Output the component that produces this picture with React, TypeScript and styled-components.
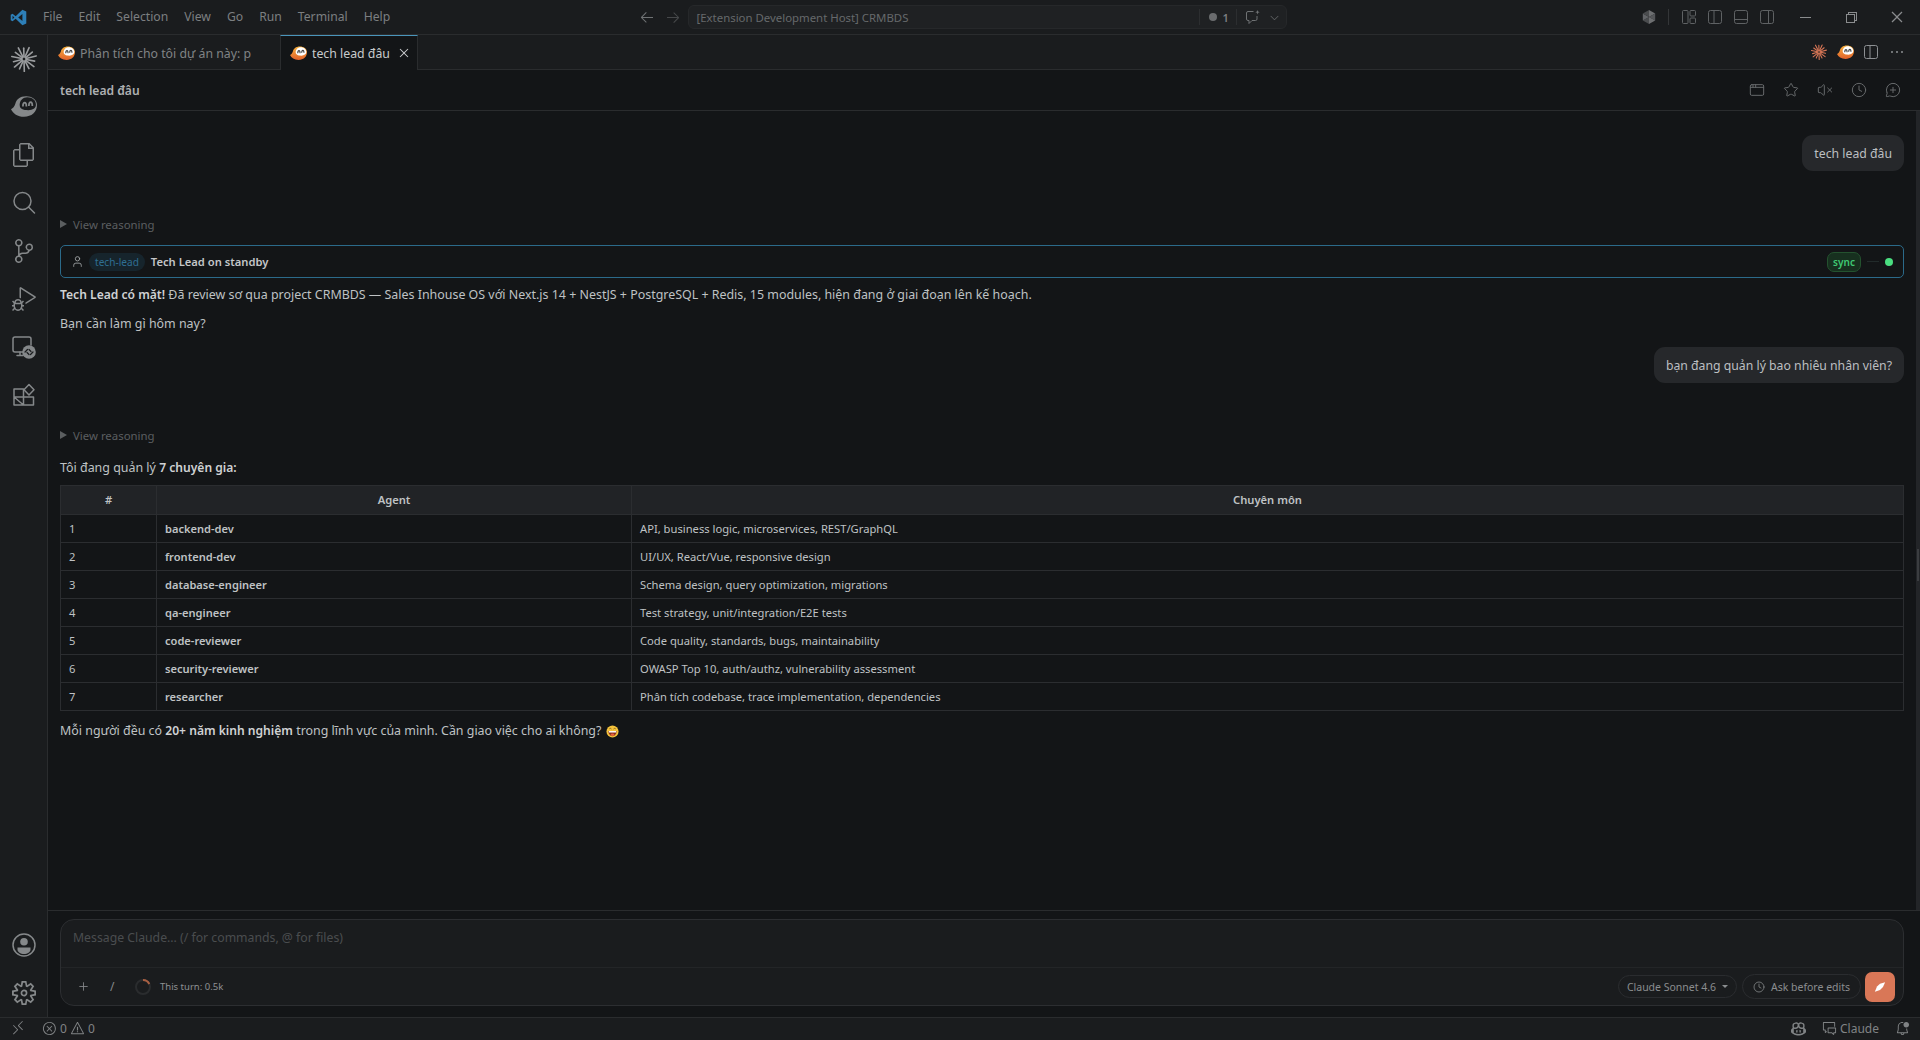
import React from "react";
import styled, { createGlobalStyle } from "styled-components";
import {
  VscFiles, VscSourceControl, VscDebugAlt, VscSettingsGear, VscArrowLeft, VscArrowRight, VscChevronDown,
  VscChromeMinimize, VscChromeRestore, VscChromeClose, VscClose, VscEllipsis, VscRemote, VscError, VscWarning,
  VscBellDot, VscCopilot, VscCommentDiscussion,
} from "react-icons/vsc";
import { AppWindow, Star, VolumeX, Clock, MessageCirclePlus, User, Plus } from "lucide-react";

const FONT = `"Noto Sans", "Open Sans", "Liberation Sans", sans-serif`;

const Global = createGlobalStyle`
  html, body { margin: 0; height: 100%; background: #131517; overflow: hidden; }
  #root { height: 100vh; }
  * { box-sizing: border-box; }
`;

const Shell = styled.div`
  height: 1040px; width: 1920px; display: flex; flex-direction: column;
  font-family: ${FONT}; font-size: 12.4px; color: #bfc2c4; background: #131517;
`;

/* ---------- title bar ---------- */
const TitleBar = styled.header`
  height: 35px; flex: none; display: grid; grid-template-columns: 1fr auto 1fr; align-items: center;
  background: #1a1c1e; border-bottom: 1px solid #2a2c2e;
`;
const TitleLeft = styled.div`display: flex; align-items: center;`;
const LogoCell = styled.div`width: 35px; padding-left: 10px; display: flex; align-items: center;`;
const MenuItem = styled.span`padding: 0 8px; color: #7c7f81; font-size: 12.2px; line-height: 34px;`;
const TitleCenter = styled.div`display: flex; align-items: center;`;
const NavButton = styled.span<{ $dim?: boolean }>`
  width: 26px; height: 24px; display: flex; align-items: center; justify-content: center;
  color: ${(p) => (p.$dim ? "#46484a" : "#6f7274")}; font-size: 16px;
`;
const CommandCenter = styled.div`
  width: 599px; height: 24px; margin-left: 2px; display: flex; align-items: center;
  background: #1f2123; border: 1px solid #26282a; border-radius: 6px; padding-left: 8px;
`;
const CommandText = styled.span`flex: 1; color: #66696b; font-size: 11.4px;`;
const CmdSep = styled.span`width: 1px; height: 16px; background: #2c2e30;`;
const CmdDot = styled.span`width: 8px; height: 8px; border-radius: 50%; background: #6a6c6e; margin: 0 6px 0 9px;`;
const CmdCount = styled.span`font-size: 11px; color: #7b7e80; font-weight: 600; margin-right: 7px; width: 6px;`;
const CmdChat = styled.span`display: flex; margin: 0 7px 0 8px; color: #6f7274;`;
const CmdChevron = styled.span`display: flex; color: #626466; font-size: 13px; margin-right: 5px;`;
const TitleRight = styled.div`display: flex; align-items: center; justify-content: flex-end;`;
const ShieldCell = styled.span`width: 26px; display: flex; justify-content: center; margin-right: 6px;`;
const TitleSep = styled.span`width: 1px; height: 16px; background: #343638; margin-right: 7px;`;
const LayoutCell = styled.span`width: 26px; display: flex; justify-content: center; color: #5f6264;`;
const WinCell = styled.span`
  width: 46px; height: 34px; display: flex; align-items: center; justify-content: center;
  color: #8a8c8e; font-size: 16px;
`;
const WinGroup = styled.div`display: flex; margin-left: 2px;`;

/* ---------- body ---------- */
const Body = styled.div`flex: 1; min-height: 0; display: flex;`;
const ActivityBar = styled.nav`
  width: 48px; flex: none; display: flex; flex-direction: column; justify-content: space-between;
  background: #1a1c1e; border-right: 1px solid #2a2c2e;
`;
const ActivityGroup = styled.div`display: flex; flex-direction: column;`;
const ActivityCell = styled.div`
  width: 47px; height: 48px; display: flex; align-items: center; justify-content: center;
  color: #85888a; font-size: 24px;
`;
const Editor = styled.main`flex: 1; min-width: 0; display: flex; flex-direction: column;`;

const TabBar = styled.div`
  height: 35px; flex: none; display: flex; background: #1a1c1e; border-bottom: 1px solid #2a2c2e;
`;
const Tab = styled.div<{ $active?: boolean }>`
  display: flex; align-items: center; height: 35px; padding-left: 9px;
  width: ${(p) => (p.$active ? "138px" : "232px")};
  background: ${(p) => (p.$active ? "#131517" : "transparent")};
  border-top: 1px solid ${(p) => (p.$active ? "#4a95bb" : "transparent")};
  border-left: 1px solid ${(p) => (p.$active ? "#2a2c2e" : "transparent")};
  border-right: 1px solid ${(p) => (p.$active ? "#2a2c2e" : "transparent")};
  color: ${(p) => (p.$active ? "#c8cacc" : "#808385")};
  font-size: 12.3px; overflow: hidden; white-space: nowrap;
`;
const TabLabel = styled.span`margin-left: 5px; flex: 1; min-width: 0; overflow: hidden;`;
const TabClose = styled.span`display: flex; font-size: 16px; color: #c8cacc; margin-right: 5px;`;
const TabActions = styled.div`margin-left: auto; display: flex; align-items: center; padding-right: 10px;`;
const TabAction = styled.span`width: 26px; display: flex; justify-content: center; color: #8d9093; font-size: 16px;`;

const ChatHeader = styled.div`
  height: 41px; flex: none; display: flex; align-items: center; padding: 0 19px 0 12px;
  border-bottom: 1px solid #2a2c2e;
`;
const ChatTitle = styled.h1`
  margin: 0; flex: 1; font-size: 12.1px; font-weight: 600; color: #aeb0b2;
`;
const HeaderIcons = styled.div`display: flex; align-items: center; gap: 18px; color: #66696b;`;

const ScrollArea = styled.div`flex: 1; min-height: 0; display: flex;`;
const Messages = styled.section`flex: 1; min-width: 0; padding: 24px 12px 0 12px; display: flex; flex-direction: column;`;
const ScrollTrack = styled.div`width: 4px; flex: none; background: #232528; position: relative;`;
const ScrollThumb = styled.div`
  position: absolute; top: 438px; left: 1px; width: 2px; height: 32px; background: #3b3d40;
`;

const UserRow = styled.div<{ $gap?: number }>`
  display: flex; justify-content: flex-end; margin-top: ${(p) => p.$gap ?? 0}px;
`;
const UserBubble = styled.div`
  height: 36px; padding: 0 12px; display: flex; align-items: center;
  background: #26282b; border-radius: 11px; color: #bcbfc1; font-size: 12.25px;
`;
const Reasoning = styled.div<{ $gap: number }>`
  margin-top: ${(p) => p.$gap}px; height: 16px; display: flex; align-items: center; gap: 6px;
  color: #5b5e60; font-size: 11.4px;
`;
const Triangle = styled.span`
  width: 0; height: 0; border-left: 7px solid #5b5e60;
  border-top: 4px solid transparent; border-bottom: 4px solid transparent;
`;
const AgentBox = styled.div`
  margin-top: 13px; height: 33px; display: flex; align-items: center; padding: 0 8px 0 10px;
  border: 1px solid #2b6a8a; border-radius: 5px;
`;
const AgentPerson = styled.span`display: flex; color: #a4a7a9; margin-right: 5px;`;
const AgentPill = styled.span`
  height: 18px; padding: 0 6px; display: flex; align-items: center; border-radius: 9px;
  background: #16242c; color: #2f6f93; font-size: 10.1px;
`;
const AgentTitle = styled.span`margin-left: 6px; flex: 1; font-size: 11.2px; font-weight: 600; color: #c4c6c8;`;
const SyncPill = styled.span`
  height: 20px; width: 34px; display: flex; align-items: center; justify-content: center; border-radius: 7px;
  background: #17301f; border: 1px solid #24522f; color: #3fc873; font-size: 10px; font-weight: 600;
`;
const SyncLine = styled.span`width: 12px; height: 1px; background: #222b2b; margin: 0 6px;`;
const SyncDot = styled.span`width: 8px; height: 8px; border-radius: 50%; background: #4ade80; margin-right: 2px;`;
const Para = styled.p<{ $gap: number }>`
  margin: ${(p) => p.$gap}px 0 0; font-size: 12.43px; line-height: 18px; color: #bfc2c4;
  display: flex; align-items: center; white-space: pre-wrap;
  strong { font-weight: 600; color: #cfd1d3; font-size: 12.1px; }
`;
const Table = styled.table`
  margin-top: 8px; width: 100%; border-collapse: collapse; table-layout: fixed; font-size: 11.2px;
`;
const Th = styled.th<{ $w?: number }>`
  width: ${(p) => (p.$w ? `${p.$w}px` : "auto")}; height: 29px; padding: 0 0 1px;
  background: #212326; border: 1px solid #2b2d30; font-weight: 600; color: #bfc2c4; text-align: center;
`;
const Td = styled.td`
  height: 28px; padding: 0 8px 1px; border: 1px solid #2b2d30; color: #bfc2c4;
`;
const AgentName = styled(Td)`font-weight: 600; font-size: 11.1px;`;
const EmojiWrap = styled.span`display: inline-flex; margin-left: 5px;`;

/* ---------- composer ---------- */
const ComposerWrap = styled.div`
  height: 107px; flex: none; padding: 8px 16px 0 12px; border-top: 1px solid #2a2c2e; background: #131517;
`;
const Composer = styled.div`
  height: 87px; background: #1a1c1e; border: 1px solid #2c2e31; border-radius: 14px;
  display: flex; flex-direction: column;
`;
const Placeholder = styled.div`
  height: 48px; flex: none; padding: 9px 12px 0; color: #4a4d4f; font-size: 12.25px;
  border-bottom: 1px solid #232527; line-height: 18px;
`;
const ComposerBar = styled.div`flex: 1; display: flex; align-items: center; padding: 0 8px 0 16px;`;
const ToolPlus = styled.span`display: flex; color: #85888a;`;
const ToolSlash = styled.span`margin-left: 20px; color: #85888a; font-size: 12px; width: 8px;`;
const Spinner = styled.span`display: flex; margin-left: 16px;`;
const TurnText = styled.span`margin-left: 8px; flex: 1; color: #8f9193; font-size: 9.5px;`;
const ModelPill = styled.span`
  width: 119px; height: 23px; display: flex; align-items: center; justify-content: center; gap: 6px;
  border: 1px solid #2a2c2f; border-radius: 12px; color: #8a8d8f; font-size: 10.5px;
`;
const Caret = styled.span`
  width: 0; height: 0; border-top: 3.5px solid #8a8d8f;
  border-left: 3.5px solid transparent; border-right: 3.5px solid transparent;
`;
const AskPill = styled.span`
  width: 119px; height: 25px; margin-left: 5px; display: flex; align-items: center; justify-content: center; gap: 6px;
  border: 1px solid #2a2c2f; border-radius: 13px; color: #8a8d8f; font-size: 10.5px;
`;
const SendButton = styled.span`
  width: 30px; height: 30px; margin-left: 4px; border-radius: 7px; background: #d97757;
  display: flex; align-items: center; justify-content: center;
`;

/* ---------- status bar ---------- */
const StatusBar = styled.footer`
  height: 23px; flex: none; display: flex; align-items: center; justify-content: space-between;
  padding: 0 10px 2px 0; background: #1a1c1e; border-top: 1px solid #2a2c2e; color: #808385; font-size: 12px;
`;
const StatusGroup = styled.div`display: flex; align-items: center;`;
const RemoteCell = styled.span`width: 36px; padding-left: 10px; display: flex; font-size: 16px;`;
const StatusItem = styled.span<{ $ml?: number }>`
  display: flex; align-items: center; gap: 3px; margin-left: ${(p) => p.$ml ?? 0}px; font-size: 12px;
  svg { font-size: 15px; }
`;

/* ---------- drawn icons ---------- */
const Burst = ({ size, color, width }: { size: number; color: string; width: number }) => (
  <svg width={size} height={size} viewBox="0 0 24 24">
    {Array.from({ length: 14 }).map((_, i) => {
      const a = (i / 14) * Math.PI * 2 + 0.2;
      const r = i % 2 ? 11.5 : 10;
      return (
        <line key={i} x1={12 + 2 * Math.cos(a)} y1={12 + 2 * Math.sin(a)} x2={12 + r * Math.cos(a)}
          y2={12 + r * Math.sin(a)} stroke={color} strokeWidth={width} strokeLinecap="round" />
      );
    })}
  </svg>
);

const Blob = ({ size, body, face, ink, gradient }: { size: number; body: string; face: string; ink: string; gradient?: string }) => (
  <svg width={size} height={size} viewBox="0 0 24 24">
    {gradient && (
      <defs>
        <linearGradient id="blobGrad" x1="0" y1="0" x2="0" y2="1">
          <stop offset="0" stopColor={gradient} />
          <stop offset="1" stopColor={body} />
        </linearGradient>
      </defs>
    )}
    <path d="M0 14c2-1 3-2 4-5 1-4 4-7 10-7 5 0 10 3 10 8 0 7-5 11-12 11-6 0-10-3-12-7z" fill={gradient ? "url(#blobGrad)" : body} />
    <path d="M8 10c0-4 3-7 7-7 5 0 8 3 8 7 0 3-3 5-7 5-5 0-8-1-8-5z" fill={face} />
    <path d="M11 11.500c0-2.500.7-3.500 1.700-3.500s1.500 1 1.500 3.500M16.500 11c0-2.500.7-3.500 1.700-3.500s1.500 1 1.500 3.500" fill="none" stroke={ink} strokeWidth="1.600" />
  </svg>
);

const VsLogo = () => (
  <svg width="17" height="17" viewBox="0 0 24 24">
    <path d="M17.500 1 23 3.600v16.800L17.500 23 8 13.900 3.600 17.400 1 16V8l2.600-1.400L8 10.100 17.500 1zM17.500 7.200 11.600 12l5.900 4.800V7.200zM3.600 9.500v5L6.200 12 3.600 9.500z" fill="#2d7fb8" />
  </svg>
);

const Shield = () => (
  <svg width="16" height="16" viewBox="0 0 16 16">
    <path d="M8 1 14.200 4.500 8 8z" fill="#6d6f71" />
    <path d="M14.200 4.500v7L8 8z" fill="#55575a" />
    <path d="M14.200 11.500 8 15V8z" fill="#6d6f71" />
    <path d="M8 15 1.800 11.500 8 8z" fill="#4a4c4e" />
    <path d="M1.800 11.500v-7L8 8z" fill="#636568" />
    <path d="M1.800 4.500 8 1v7z" fill="#4a4c4e" />
  </svg>
);

const LayoutGlyph = ({ kind }: { kind: "custom" | "left" | "panel" | "right" }) => (
  <svg width="16" height="16" viewBox="0 0 16 16" fill="none" stroke="currentColor" strokeWidth="1">
    {kind === "custom" ? (
      <>
        <rect x="1.500" y="1.500" width="5.500" height="13" rx="1" />
        <rect x="9" y="1.500" width="5.500" height="5.500" rx="1" />
        <rect x="9" y="9" width="5.500" height="5.500" rx="1" />
      </>
    ) : (
      <>
        <rect x="1.500" y="1.500" width="13" height="13" rx="2" />
        {kind === "left" && <path d="M7 1.500v13" />}
        {kind === "panel" && <path d="M1.500 10.500h13" />}
        {kind === "right" && <path d="M9.500 1.500v13" />}
      </>
    )}
  </svg>
);

const ChatSpark = () => (
  <svg width="16" height="16" viewBox="0 0 16 16" fill="none" stroke="currentColor" strokeWidth="1">
    <path d="M8.500 2.500H3a1.500 1.500 0 0 0-1.500 1.500v6A1.500 1.500 0 0 0 3 11.500h1v3l3-3h3.500A1.500 1.500 0 0 0 12 10V7" />
    <path d="M12.500 1l.6 1.600 1.600.6-1.600.6-.6 1.600-.6-1.600-1.600-.6 1.600-.6z" fill="currentColor" stroke="none" />
  </svg>
);

const SearchGlyph = () => (
  <svg width="24" height="24" viewBox="0 0 24 24" fill="none" stroke="currentColor" strokeWidth="1.500" strokeLinecap="round">
    <circle cx="10.500" cy="10" r="8.500" />
    <path d="M16.500 16l6 6" />
  </svg>
);

const RemoteGlyph = () => (
  <svg width="24" height="24" viewBox="0 0 24 24" fill="none" stroke="currentColor" strokeWidth="1.500" strokeLinecap="round">
    <path d="M11 17H3a2 2 0 0 1-2-2V4a2 2 0 0 1 2-2h14a2 2 0 0 1 2 2v6" />
    <path d="M5 20.500h6M8 17v3.500" />
    <circle cx="17" cy="17" r="6.800" fill="currentColor" stroke="none" />
    <path d="M15.500 14.500l-2.500 2.500 M18.500 19.500l2.500-2.500 M17 14.500l2 2 M17 19.500l-2-2" stroke="#1a1c1e" strokeWidth="1.200" />
  </svg>
);

const ExtensionsGlyph = () => (
  <svg width="24" height="24" viewBox="0 0 24 24" fill="none" stroke="currentColor" strokeWidth="1.500" strokeLinejoin="round">
    <path d="M2 6h9.500v16H2zM2 14h19.500v8h-10z" />
    <path d="M17 1.500l5 5.300-5 5.200-5-5.200z" />
  </svg>
);

const AccountGlyph = () => (
  <svg width="24" height="24" viewBox="0 0 24 24">
    <circle cx="12" cy="12" r="11" fill="none" stroke="currentColor" strokeWidth="1.500" />
    <circle cx="12" cy="8.800" r="3.800" fill="currentColor" />
    <path d="M5.500 14.500h13v2c0 2.500-3 4.500-6.500 4.500s-6.500-2-6.500-4.500z" fill="currentColor" />
  </svg>
);

const SpinnerGlyph = () => (
  <svg width="18" height="18" viewBox="0 0 18 18" fill="none" strokeWidth="2">
    <circle cx="9" cy="9" r="7" stroke="#2a2c2e" />
    <path d="M9 2a7 7 0 0 1 6.300 4" stroke="#a85f42" />
  </svg>
);

const SendGlyph = () => (
  <svg width="12" height="12" viewBox="0 0 14 14">
    <path d="M13 1.500 7 3.200 3.500 6.500 1 12.500 7 10.500 10.500 7z" fill="#fff" />
  </svg>
);

const Grin = () => (
  <svg width="13" height="13" viewBox="0 0 14 14">
    <circle cx="7" cy="7" r="6.500" fill="#f5c33b" />
    <path d="M2.500 6.500h9c0 3-2 5.500-4.500 5.500S2.500 9.500 2.500 6.500z" fill="#8a2f1d" />
    <path d="M3 6.500h8v1.600H3z" fill="#fff" />
    <ellipse cx="7" cy="10.500" rx="2" ry="1.300" fill="#e8643c" />
    <path d="M3.500 4.300c.6-.9 1.800-.9 2.400 0M8.100 4.300c.6-.9 1.800-.9 2.400 0" stroke="#6b4a12" strokeWidth=".8" fill="none" />
  </svg>
);

const MENU = ["File", "Edit", "Selection", "View", "Go", "Run", "Terminal", "Help"];
const AGENTS: [string, string][] = [
  ["backend-dev", "API, business logic, microservices, REST/GraphQL"],
  ["frontend-dev", "UI/UX, React/Vue, responsive design"],
  ["database-engineer", "Schema design, query optimization, migrations"],
  ["qa-engineer", "Test strategy, unit/integration/E2E tests"],
  ["code-reviewer", "Code quality, standards, bugs, maintainability"],
  ["security-reviewer", "OWASP Top 10, auth/authz, vulnerability assessment"],
  ["researcher", "Phân tích codebase, trace implementation, dependencies"],
];

export default function App() {
  return (
    <Shell>
      <Global />
      <TitleBar>
        <TitleLeft>
          <LogoCell><VsLogo /></LogoCell>
          {MENU.map((m) => <MenuItem key={m}>{m}</MenuItem>)}
        </TitleLeft>
        <TitleCenter>
          <NavButton><VscArrowLeft /></NavButton>
          <NavButton $dim><VscArrowRight /></NavButton>
          <CommandCenter>
            <CommandText>[Extension Development Host] CRMBDS</CommandText>
            <CmdSep />
            <CmdDot />
            <CmdCount>1</CmdCount>
            <CmdSep />
            <CmdChat><ChatSpark /></CmdChat>
            <CmdChevron><VscChevronDown /></CmdChevron>
          </CommandCenter>
        </TitleCenter>
        <TitleRight>
          <ShieldCell><Shield /></ShieldCell>
          <TitleSep />
          <LayoutCell><LayoutGlyph kind="custom" /></LayoutCell>
          <LayoutCell><LayoutGlyph kind="left" /></LayoutCell>
          <LayoutCell><LayoutGlyph kind="panel" /></LayoutCell>
          <LayoutCell><LayoutGlyph kind="right" /></LayoutCell>
          <WinGroup>
            <WinCell><VscChromeMinimize /></WinCell>
            <WinCell><VscChromeRestore /></WinCell>
            <WinCell><VscChromeClose /></WinCell>
          </WinGroup>
        </TitleRight>
      </TitleBar>

      <Body>
        <ActivityBar>
          <ActivityGroup>
            <ActivityCell><Burst size={26} color="#9a9c9e" width={1.5} /></ActivityCell>
            <ActivityCell><Blob size={26} body="#85888a" face="#1a1c1e" ink="#85888a" /></ActivityCell>
            <ActivityCell><VscFiles /></ActivityCell>
            <ActivityCell><SearchGlyph /></ActivityCell>
            <ActivityCell><VscSourceControl /></ActivityCell>
            <ActivityCell><VscDebugAlt /></ActivityCell>
            <ActivityCell><RemoteGlyph /></ActivityCell>
            <ActivityCell><ExtensionsGlyph /></ActivityCell>
          </ActivityGroup>
          <ActivityGroup>
            <ActivityCell><AccountGlyph /></ActivityCell>
            <ActivityCell><VscSettingsGear /></ActivityCell>
          </ActivityGroup>
        </ActivityBar>

        <Editor>
          <TabBar>
            <Tab>
              <Blob size={17} body="#e2622b" face="#fff" ink="#444" gradient="#f8b13c" />
              <TabLabel>Phân tích cho tôi dự án này: p</TabLabel>
            </Tab>
            <Tab $active>
              <Blob size={17} body="#e2622b" face="#fff" ink="#444" gradient="#f8b13c" />
              <TabLabel>tech lead đâu</TabLabel>
              <TabClose><VscClose /></TabClose>
            </Tab>
            <TabActions>
              <TabAction><Burst size={16} color="#d97757" width={1.6} /></TabAction>
              <TabAction><Blob size={17} body="#e2622b" face="#fff" ink="#444" gradient="#f8b13c" /></TabAction>
              <TabAction><LayoutGlyph kind="left" /></TabAction>
              <TabAction><VscEllipsis /></TabAction>
            </TabActions>
          </TabBar>

          <ChatHeader>
            <ChatTitle>tech lead đâu</ChatTitle>
            <HeaderIcons>
              <AppWindow size={16} strokeWidth={1.5} />
              <Star size={16} strokeWidth={1.5} />
              <VolumeX size={16} strokeWidth={1.5} />
              <Clock size={16} strokeWidth={1.5} />
              <MessageCirclePlus size={16} strokeWidth={1.5} />
            </HeaderIcons>
          </ChatHeader>

          <ScrollArea>
            <Messages>
              <UserRow><UserBubble>tech lead đâu</UserBubble></UserRow>
              <Reasoning $gap={45}><Triangle />View reasoning</Reasoning>
              <AgentBox>
                <AgentPerson><User size={13} strokeWidth={1.6} /></AgentPerson>
                <AgentPill>tech-lead</AgentPill>
                <AgentTitle>Tech Lead on standby</AgentTitle>
                <SyncPill>sync</SyncPill>
                <SyncLine />
                <SyncDot />
              </AgentBox>
              <Para $gap={8}>
                <span><strong>Tech Lead có mặt!</strong> Đã review sơ qua project CRMBDS — Sales Inhouse OS với Next.js 14 + NestJS + PostgreSQL + Redis, 15 modules, hiện đang ở giai đoạn lên kế hoạch.</span>
              </Para>
              <Para $gap={11}>Bạn cần làm gì hôm nay?</Para>
              <UserRow $gap={14}><UserBubble>bạn đang quản lý bao nhiêu nhân viên?</UserBubble></UserRow>
              <Reasoning $gap={44}><Triangle />View reasoning</Reasoning>
              <Para $gap={16}><span>Tôi đang quản lý <strong>7 chuyên gia:</strong></span></Para>
              <Table>
                <thead>
                  <tr><Th $w={96}>#</Th><Th $w={475}>Agent</Th><Th>Chuyên môn</Th></tr>
                </thead>
                <tbody>
                  {AGENTS.map(([name, skill], i) => (
                    <tr key={name}>
                      <Td>{i + 1}</Td>
                      <AgentName>{name}</AgentName>
                      <Td>{skill}</Td>
                    </tr>
                  ))}
                </tbody>
              </Table>
              <Para $gap={11}>
                <span>Mỗi người đều có <strong>20+ năm kinh nghiệm</strong> trong lĩnh vực của mình. Cần giao việc cho ai không?</span>
                <EmojiWrap><Grin /></EmojiWrap>
              </Para>
            </Messages>
            <ScrollTrack><ScrollThumb /></ScrollTrack>
          </ScrollArea>

          <ComposerWrap>
            <Composer>
              <Placeholder>Message Claude... (/ for commands, @ for files)</Placeholder>
              <ComposerBar>
                <ToolPlus><Plus size={13} strokeWidth={1.6} /></ToolPlus>
                <ToolSlash>/</ToolSlash>
                <Spinner><SpinnerGlyph /></Spinner>
                <TurnText>This turn: 0.5k</TurnText>
                <ModelPill>Claude Sonnet 4.6<Caret /></ModelPill>
                <AskPill><Clock size={12} strokeWidth={1.5} />Ask before edits</AskPill>
                <SendButton><SendGlyph /></SendButton>
              </ComposerBar>
            </Composer>
          </ComposerWrap>
        </Editor>
      </Body>

      <StatusBar>
        <StatusGroup>
          <RemoteCell><VscRemote /></RemoteCell>
          <StatusItem $ml={6}><VscError />0</StatusItem>
          <StatusItem $ml={3}><VscWarning />0</StatusItem>
        </StatusGroup>
        <StatusGroup>
          <StatusItem><VscCopilot /></StatusItem>
          <StatusItem $ml={16}><VscCommentDiscussion />Claude</StatusItem>
          <StatusItem $ml={16}><VscBellDot /></StatusItem>
        </StatusGroup>
      </StatusBar>
    </Shell>
  );
}
